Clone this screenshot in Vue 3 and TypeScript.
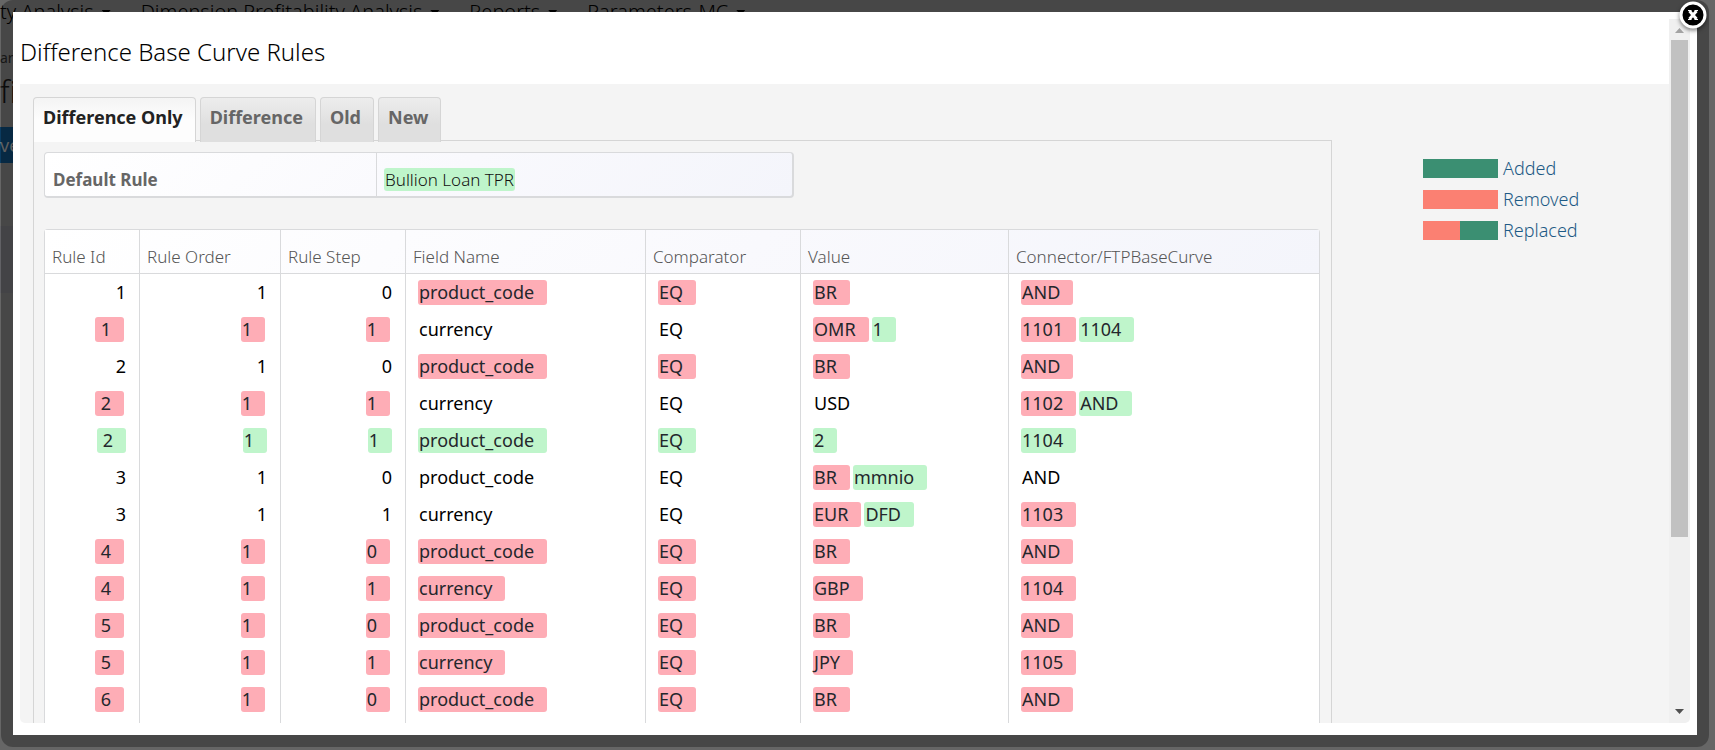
<script setup lang="ts">
import { ref } from 'vue'

type Kind = 'same' | 'del' | 'ins'
interface Part {
  text: string
  kind: Kind
}

const s = (text: string): Part[] => [{ text, kind: 'same' }]
const d = (text: string): Part[] => [{ text, kind: 'del' }]
const i = (text: string): Part[] => [{ text, kind: 'ins' }]

const tabs = ['Difference Only', 'Difference', 'Old', 'New']
const active = ref(0)

const columns = ['Rule Id', 'Rule Order', 'Rule Step', 'Field Name', 'Comparator', 'Value', 'Connector/FTPBaseCurve']

const rows: Part[][][] = [
  [s('1'), s('1'), s('0'), d('product_code'), d('EQ'), d('BR'), d('AND')],
  [d('1'), d('1'), d('1'), s('currency'), s('EQ'), [...d('OMR'), ...i('1')], [...d('1101'), ...i('1104')]],
  [s('2'), s('1'), s('0'), d('product_code'), d('EQ'), d('BR'), d('AND')],
  [d('2'), d('1'), d('1'), s('currency'), s('EQ'), s('USD'), [...d('1102'), ...i('AND')]],
  [i('2'), i('1'), i('1'), i('product_code'), i('EQ'), i('2'), i('1104')],
  [s('3'), s('1'), s('0'), s('product_code'), s('EQ'), [...d('BR'), ...i('mmnio')], s('AND')],
  [s('3'), s('1'), s('1'), s('currency'), s('EQ'), [...d('EUR'), ...i('DFD')], d('1103')],
  [d('4'), d('1'), d('0'), d('product_code'), d('EQ'), d('BR'), d('AND')],
  [d('4'), d('1'), d('1'), d('currency'), d('EQ'), d('GBP'), d('1104')],
  [d('5'), d('1'), d('0'), d('product_code'), d('EQ'), d('BR'), d('AND')],
  [d('5'), d('1'), d('1'), d('currency'), d('EQ'), d('JPY'), d('1105')],
  [d('6'), d('1'), d('0'), d('product_code'), d('EQ'), d('BR'), d('AND')],
]

const tagOf: Record<Kind, string> = { same: 'span', del: 'del', ins: 'ins' }
</script>

<template>
  <div class="screen">
    <div class="backdrop" aria-hidden="true">
      <nav class="menu">
        <span class="menu-item">ty Analysis<i class="caret"></i></span>
        <span class="menu-item">Dimension Profitability Analysis<i class="caret"></i></span>
        <span class="menu-item">Reports<i class="caret"></i></span>
        <span class="menu-item">Parameters-MC<i class="caret"></i></span>
      </nav>
      <div class="edge">
        <p class="crumb">ar</p>
        <p class="page-title">fi</p>
        <span class="save">ve</span>
        <div class="band"></div>
      </div>
    </div>

    <section class="frame" role="dialog" aria-labelledby="dialog-title">
      <div class="modal">
        <div class="scroller">
          <div class="content">
            <h1 id="dialog-title" class="title">Difference Base Curve Rules</h1>
            <div class="body">
              <main class="main">
                <div class="tabs" role="tablist">
                  <button
                    v-for="(t, n) in tabs"
                    :key="t"
                    type="button"
                    role="tab"
                    class="tab"
                    :class="{ active: n === active }"
                    :aria-selected="n === active"
                    @click="active = n"
                  >{{ t }}</button>
                </div>
                <div class="panel" role="tabpanel">
                  <table class="default-rule">
                    <tbody>
                      <tr>
                        <th scope="row">Default Rule</th>
                        <td><ins>Bullion Loan TPR</ins></td>
                      </tr>
                    </tbody>
                  </table>

                  <table class="rules">
                    <colgroup>
                      <col v-for="(c, n) in columns" :key="c" :class="'c' + n" />
                    </colgroup>
                    <thead>
                      <tr>
                        <th v-for="c in columns" :key="c" scope="col">{{ c }}</th>
                      </tr>
                    </thead>
                    <tbody>
                      <tr v-for="(row, r) in rows" :key="r">
                        <td v-for="(cell, c) in row" :key="c" :class="{ num: c < 3, id: c === 0 }">
                          <div class="parts">
                            <component
                              :is="tagOf[p.kind]"
                              v-for="(p, k) in cell"
                              :key="k"
                              class="part"
                              :class="p.kind"
                            >{{ p.text }}</component>
                          </div>
                        </td>
                      </tr>
                    </tbody>
                  </table>
                </div>
              </main>
              <aside class="legend">
                <div class="legend-row"><span class="swatch added"></span>Added</div>
                <div class="legend-row"><span class="swatch removed"></span>Removed</div>
                <div class="legend-row"><span class="swatch replaced"></span>Replaced</div>
              </aside>
            </div>
          </div>
          <div class="scrollbar" aria-hidden="true">
            <svg class="arrow up" viewBox="0 0 21 21"><path d="M10.5 9 15 14H6z" /></svg>
            <div class="track"><div class="thumb"></div></div>
            <svg class="arrow down" viewBox="0 0 21 21"><path d="M6 7h9l-4.500 5z" /></svg>
          </div>
        </div>
      </div>
      <button class="close" type="button" aria-label="Close">
        <svg viewBox="0 0 34 34">
          <circle cx="17" cy="15" r="12" fill="#000" stroke="#fff" stroke-width="3" />
          <path d="M13.500 11 20.500 19M20.500 11 13.500 19" stroke="#fff" stroke-width="3" />
          <path d="M12 10.500h3.500M18.500 10.500H22M12 19.500h3.500M18.500 19.500H22" stroke="#fff" stroke-width="1" />
        </svg>
      </button>
    </section>
  </div>
</template>

<style>
body {
  margin: 0;
  overflow: hidden;
}
</style>

<style scoped>
.screen {
  position: relative;
  height: 100vh;
  overflow: hidden;
  background: #666;
  font-family: 'Noto Sans', 'Open Sans', sans-serif;
  font-size: 18px;
  line-height: 25px;
  color: #000;
}
.screen * {
  box-sizing: border-box;
}

.backdrop {
  height: 100%;
  white-space: nowrap;
  overflow: hidden;
}
.menu {
  display: flex;
  gap: 30px;
  height: 37px;
  font-size: 20px;
  font-weight: 300;
  line-height: 24px;
}
.caret {
  display: inline-block;
  width: 9px;
  height: 5px;
  margin-left: 8px;
  vertical-align: 4px;
  background: #000;
  clip-path: polygon(0 0, 100% 0, 50% 100%);
}
.edge {
  width: 13px;
  overflow: hidden;
}
.crumb {
  margin: 8px 0 0;
  font-size: 14px;
  color: #222;
}
.page-title {
  margin: 0;
  font-size: 31px;
  font-weight: 300;
  line-height: 42px;
  color: #111;
}
.save {
  display: block;
  margin-top: 15px;
  line-height: 36px;
  color: #888;
  background: #0b3c61;
}
.band {
  height: 67px;
  margin-top: 63px;
  background: #616165;
}

.frame {
  position: absolute;
  inset: 0 6px 3px 1px;
  padding: 12px;
  border-radius: 12px;
  background: rgba(0, 0, 0, 0.3);
}
.modal {
  height: 100%;
  padding: 7px 7px 12px;
  background: #fff;
}
.scroller {
  display: flex;
  height: 100%;
  overflow: hidden;
  border-radius: 5px;
}
.content {
  display: flex;
  flex: 1;
  flex-direction: column;
  min-width: 0;
  overflow: hidden;
}
.title {
  flex: none;
  margin: 0;
  padding: 17px 0 16px;
  font-size: 24px;
  font-weight: 300;
  line-height: 32px;
}
.body {
  display: grid;
  flex: none;
  grid-template-columns: 1fr 246px;
  gap: 91px;
  padding: 13px 0 0 13px;
  background: #f4f4f4;
}

.tabs {
  display: flex;
  gap: 4px;
  height: 45px;
  margin-bottom: -2px;
  position: relative;
}
.tab {
  padding: 0 12px 6px 9px;
  border: 1px solid #d5d5d5;
  border-bottom: 0;
  border-radius: 4px 4px 0 0;
  background: linear-gradient(#ededed, #dfdfdf 60%);
  color: #666;
  font: inherit;
  font-weight: 700;
}
.tab.active {
  background: linear-gradient(#f4f4f4, #fdfdfd 50%);
  color: #222;
}
.panel {
  padding: 11px 11px 0 10px;
  border: 1px solid #d5d5d5;
  border-bottom: 0;
}

table {
  border-collapse: separate;
  border-spacing: 0;
  table-layout: fixed;
}
th,
td {
  padding: 0;
  text-align: left;
}
th {
  font-size: 17px;
  font-weight: 300;
  color: #555;
}
.default-rule {
  width: 750px;
  margin-bottom: 31px;
  border: 1px solid #d9dadc;
  border-width: 1px 2px 2px 1px;
  border-radius: 4px;
  background: linear-gradient(135deg, #fff, #f9f9fd 55%, #f4f5fb);
}
.default-rule th {
  width: 331px;
  padding: 14px 8px 4px;
  font-weight: 700;
  color: #666;
}
.default-rule td {
  padding: 14px 7px 4px;
  border-left: 1px solid #d9dadc;
  font-size: 17px;
}
.default-rule ins {
  display: inline-block;
  padding: 0 1px;
  border-radius: 3px;
  line-height: 23px;
  font-weight: 300;
  text-decoration: none;
  color: #111;
  background: #bff5cb;
}

.rules {
  width: 100%;
  border: 1px solid #d9dadc;
  border-bottom: 0;
  border-radius: 4px 4px 0 0;
  background: #fff;
}
.c0 { width: 94px; }
.c1 { width: 141px; }
.c2 { width: 125px; }
.c3 { width: 240px; }
.c4 { width: 155px; }
.c5 { width: 208px; }
.rules thead tr {
  background: linear-gradient(135deg, #fff, #f9f9fd 55%, #f4f5fb);
}
.rules th {
  padding: 14px 7px 4px;
  border-bottom: 1px solid #d9dadc;
}
.rules th + th,
.rules td + td {
  border-left: 1px solid #d9dadc;
}
.rules td {
  height: 37px;
  padding: 0 12px;
}
.rules tbody tr:last-child td {
  height: 47px;
  padding-bottom: 10px;
}
.parts {
  display: flex;
  gap: 3px;
}
.num .parts {
  justify-content: flex-end;
}
.part {
  padding: 0 1px;
  border-radius: 3px;
  text-decoration: none;
}
.del,
.ins {
  padding-right: 13px;
  color: #24272c;
}
.del {
  background: #feadb6;
}
.ins {
  background: #bff5cb;
}
.num .del {
  margin-right: 3px;
}
.num .ins {
  margin-right: 1px;
}
.id .del,
.id .ins {
  padding-left: 6px;
}

.legend {
  display: grid;
  gap: 6px;
  align-content: start;
  padding-top: 59px;
  font-weight: 300;
  color: #1d5a85;
}
.legend-row {
  display: flex;
  align-items: center;
  gap: 5px;
}
.swatch {
  width: 75px;
  height: 19px;
}
.added {
  background: #3b8f72;
}
.removed {
  background: #fb8072;
}
.replaced {
  background: linear-gradient(90deg, #fb8072 50%, #3b8f72 50%);
}

.scrollbar {
  display: flex;
  flex-direction: column;
  width: 21px;
  background: #f0f0f0;
}
.arrow {
  width: 21px;
  height: 21px;
}
.up {
  fill: #a3a3a3;
}
.down {
  fill: #505050;
}
.track {
  flex: 1;
  padding: 0 2px;
}
.thumb {
  height: 75%;
  background: #c1c1c1;
}

.close {
  position: absolute;
  top: 0;
  right: -1px;
  width: 34px;
  height: 34px;
  padding: 0;
  border: 0;
  background: none;
}
.close svg {
  display: block;
  filter: drop-shadow(0 2px 2px rgba(0, 0, 0, 0.5));
}
</style>
